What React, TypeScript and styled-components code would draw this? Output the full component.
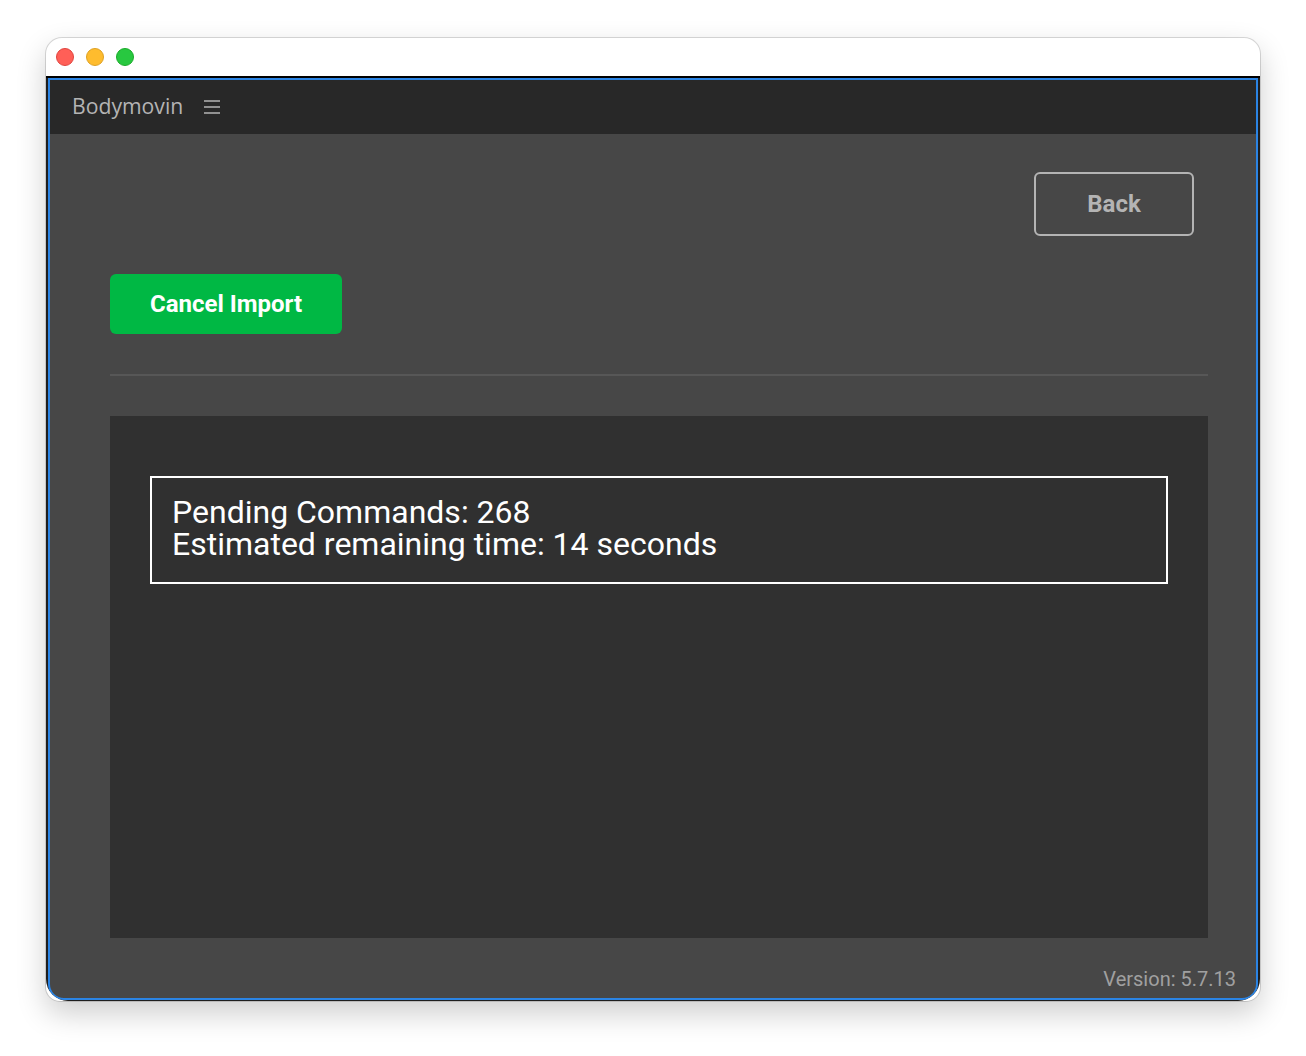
import React from 'react';
import styled, { createGlobalStyle } from 'styled-components';

const GlobalStyle = createGlobalStyle`
  html, body {
    margin: 0;
    padding: 0;
    background: #ffffff;
    font-family: Roboto, "Liberation Sans", sans-serif;
  }
`;

export default function App() {
  return (
    <Page>
      <GlobalStyle />
      <Window>
        <TitleBar>
          <TrafficLight $fill="#ff5f57" $edge="#e0443e" />
          <TrafficLight $fill="#febc2e" $edge="#dea123" />
          <TrafficLight $fill="#28c840" $edge="#1aab29" />
        </TitleBar>
        <Frame>
          <Inner>
            <AppHeader>
              <Brand>Bodymovin</Brand>
              <MenuIcon width="16" height="14" viewBox="0 0 16 14" aria-hidden="true">
                <path d="M0 1h16M0 7h16M0 13h16" stroke="#b4b4b4" strokeWidth="1.6" fill="none" />
              </MenuIcon>
            </AppHeader>
            <Main>
              <TopRow>
                <BackButton>Back</BackButton>
              </TopRow>
              <CancelButton>Cancel Import</CancelButton>
              <Divider />
              <Panel>
                <StatusBox>
                  Pending Commands: 268
                  <br />
                  Estimated remaining time: 14 seconds
                </StatusBox>
              </Panel>
              <Version>Version: 5.7.13</Version>
            </Main>
          </Inner>
        </Frame>
      </Window>
    </Page>
  );
}

const Page = styled.div`
  width: 1306px;
  height: 1056px;
  padding: 38px 46px 0;
  box-sizing: border-box;
  overflow: hidden;
`;

const Window = styled.div`
  width: 1214px;
  height: 963px;
  display: flex;
  flex-direction: column;
  background: #ffffff;
  border-radius: 16px 16px 14px 14px;
  box-shadow: 0 0 0 1px rgba(0, 0, 0, 0.14), 0 12px 30px rgba(0, 0, 0, 0.2);
`;

const TitleBar = styled.div`
  height: 38px;
  flex: none;
  display: flex;
  align-items: center;
  gap: 12px;
  padding: 0 10px;
  box-sizing: border-box;
`;

const TrafficLight = styled.span<{ $fill: string; $edge: string }>`
  width: 18px;
  height: 18px;
  box-sizing: border-box;
  border-radius: 50%;
  background: ${props => props.$fill};
  border: 1px solid ${props => props.$edge};
`;

const Frame = styled.div`
  flex: 1;
  min-height: 0;
  display: flex;
  background: #1e1e1e;
  border-top: 2px solid #000000;
  padding: 0 2px 1px;
  border-radius: 0 0 22px 22px;
  overflow: hidden;
`;

const Inner = styled.div`
  flex: 1;
  min-width: 0;
  display: flex;
  flex-direction: column;
  border: 2px solid #2b84e4;
  border-radius: 0 0 16px 16px;
  background: #474747;
  overflow: hidden;
`;

const AppHeader = styled.div`
  height: 54px;
  flex: none;
  display: flex;
  align-items: center;
  gap: 21px;
  padding-left: 22px;
  background: #282828;
`;

const Brand = styled.span`
  font-family: "Open Sans", "Noto Sans", sans-serif;
  font-size: 21.2px;
  line-height: 28px;
  padding-bottom: 3px;
  color: #b4b4b4;
`;

const MenuIcon = styled.svg`
  display: block;
`;

const Main = styled.div`
  flex: 1;
  min-height: 0;
  display: flex;
  flex-direction: column;
  padding: 38px 48px 0 60px;
`;

const TopRow = styled.div`
  display: flex;
  justify-content: flex-end;
  padding-right: 14px;
`;

const BackButton = styled.button`
  width: 160px;
  height: 64px;
  box-sizing: border-box;
  border: 2px solid #b4b4b4;
  border-radius: 6px;
  background: transparent;
  color: #b4b4b4;
  font-family: Roboto, sans-serif;
  font-size: 24px;
  font-weight: 700;
  padding: 0;
`;

const CancelButton = styled.button`
  width: 232px;
  height: 60px;
  margin-top: 38px;
  border: none;
  border-radius: 6px;
  background: #00b844;
  color: #ffffff;
  font-family: Roboto, sans-serif;
  font-size: 24px;
  font-weight: 700;
  padding: 0;
`;

const Divider = styled.div`
  height: 2px;
  margin-top: 40px;
  background: #575757;
`;

const Panel = styled.div`
  height: 522px;
  margin-top: 40px;
  padding: 60px 40px 0;
  box-sizing: border-box;
  background: #303030;
`;

const StatusBox = styled.div`
  height: 108px;
  box-sizing: border-box;
  border: 2px solid #ffffff;
  padding: 18px 20px 0;
  font-size: 32px;
  line-height: 32px;
  color: #ffffff;
`;

const Version = styled.div`
  margin-top: 29px;
  margin-right: -28px;
  text-align: right;
  font-size: 20px;
  line-height: 24px;
  color: #a0a0a0;
`;
